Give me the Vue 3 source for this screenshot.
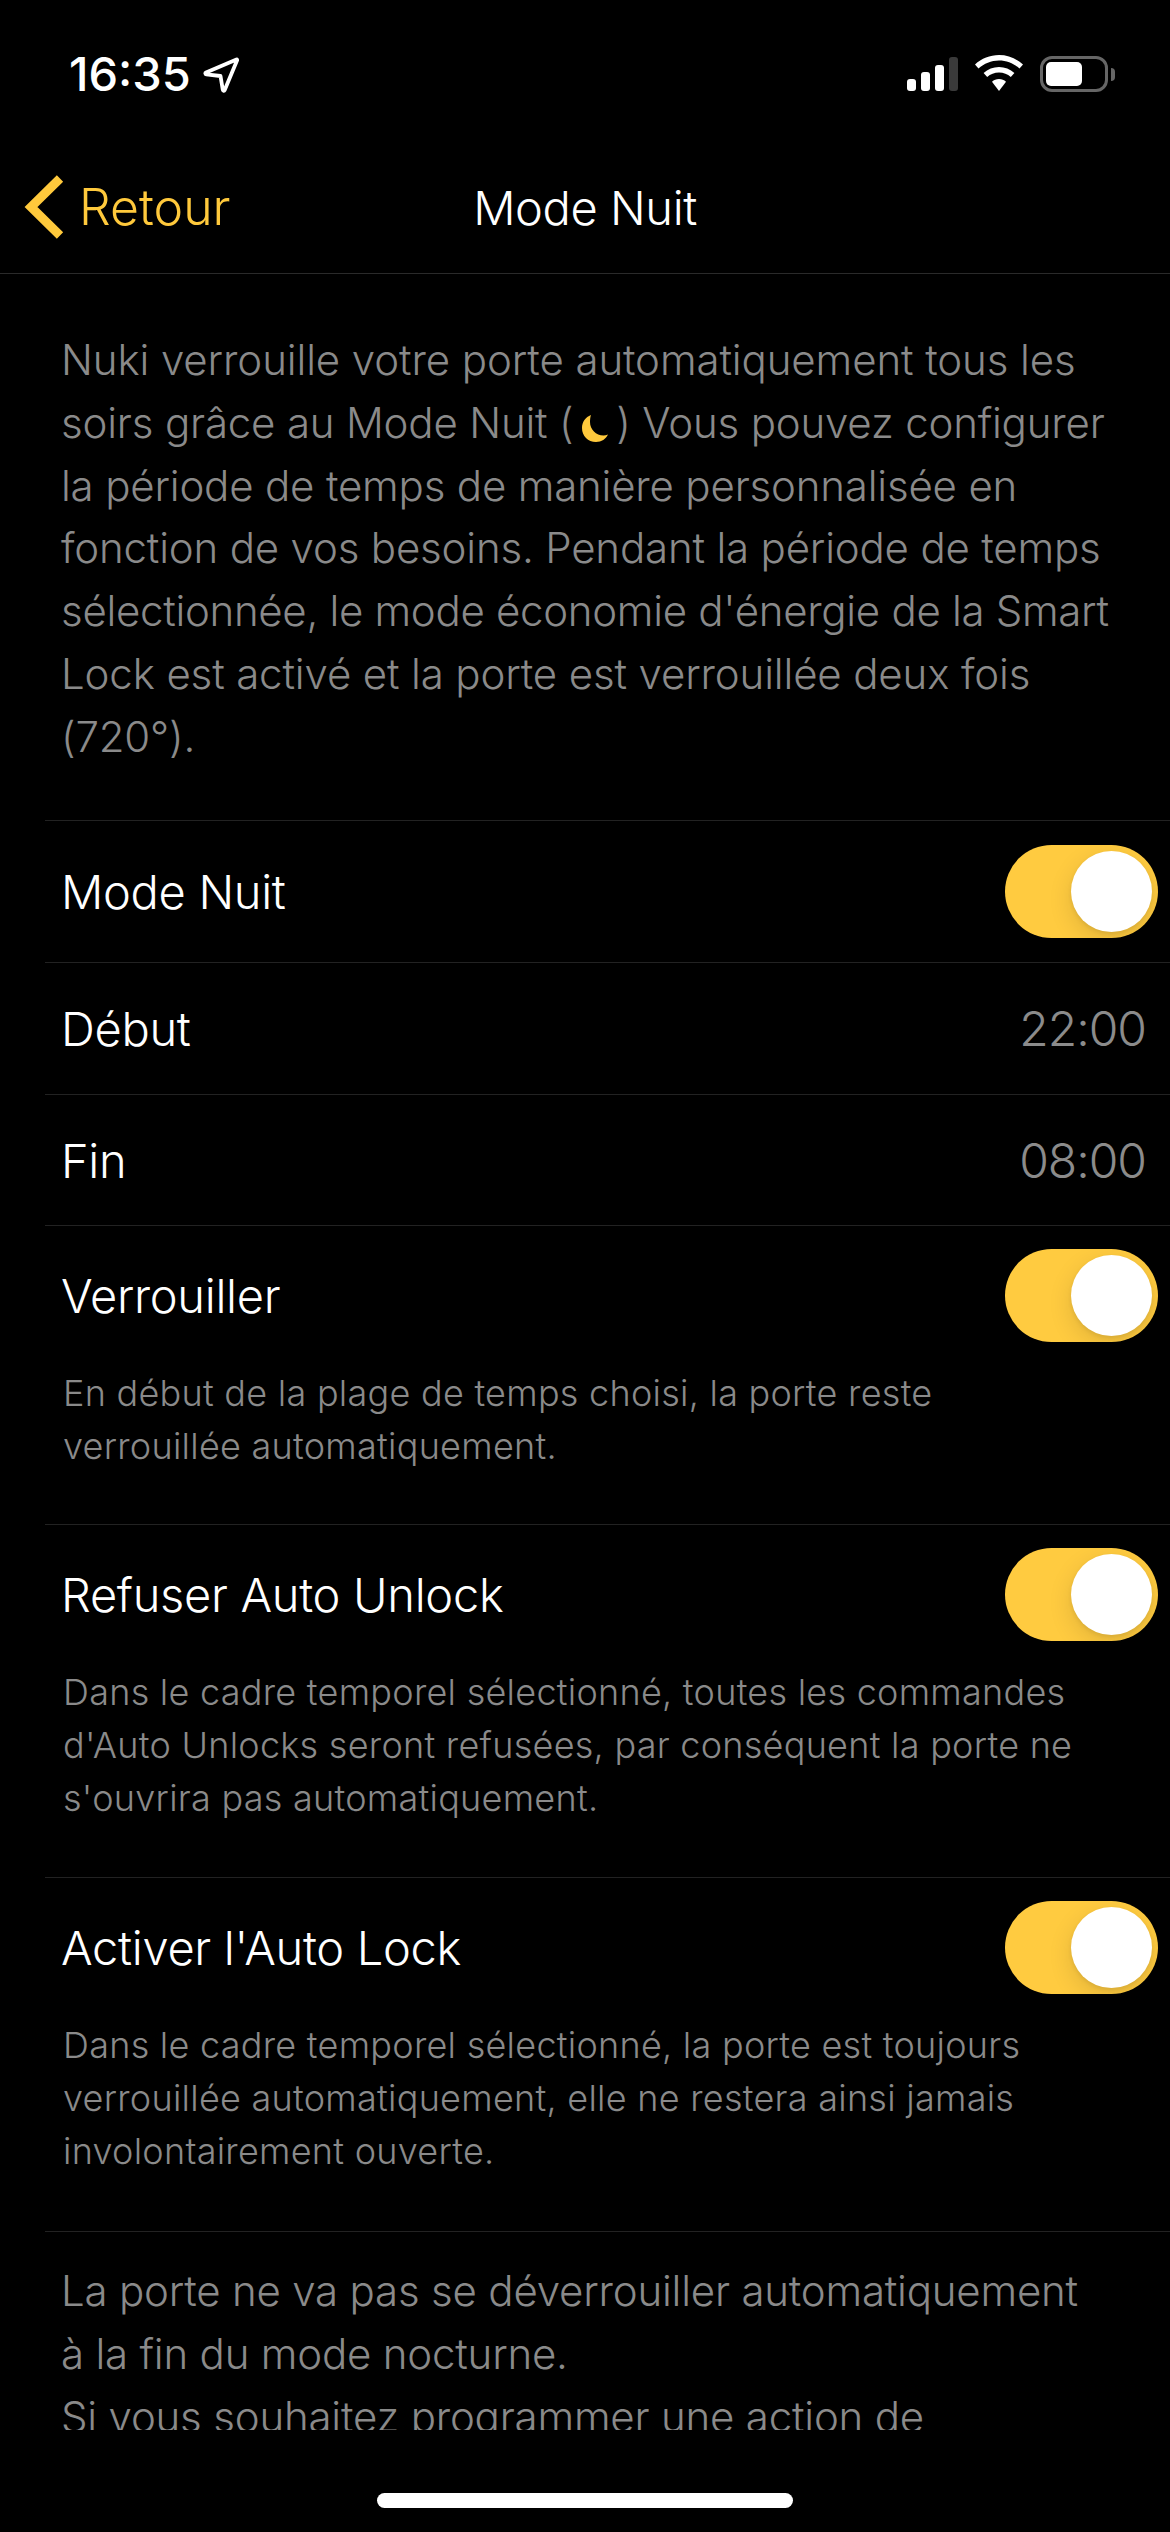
<script setup>
const timeRows = [
  { label: 'Début', value: '22:00', h: 'h132' },
  { label: 'Fin', value: '08:00', h: 'h131' }
]
const optionRows = [
  { label: 'Verrouiller', lines: ['En début de la plage de temps choisi, la porte reste', 'verrouillée automatiquement.'], h: 'o299' },
  { label: 'Refuser Auto Unlock', lines: ['Dans le cadre temporel sélectionné, toutes les commandes', "d'Auto Unlocks seront refusées, par conséquent la porte ne", "s'ouvrira pas automatiquement."], h: 'o353' },
  { label: "Activer l'Auto Lock", lines: ['Dans le cadre temporel sélectionné, la porte est toujours', 'verrouillée automatiquement, elle ne restera ainsi jamais', 'involontairement ouverte.'], h: 'o354' }
]
const introAfter = [
  { text: 'la période de temps de manière personnalisée en', track: -0.18 },
  { text: 'fonction de vos besoins. Pendant la période de temps', track: -0.18 },
  { text: "sélectionnée, le mode économie d'énergie de la Smart", track: -0.3 },
  { text: 'Lock est activé et la porte est verrouillée deux fois', track: -0.14 },
  { text: '(720°).', track: -0.18 }
]
</script>

<template>
  <div class="screen">
    <header class="status">
      <div class="time-group">
        <span class="time">16:35</span>
        <svg class="loc" viewBox="0 0 36 36" width="36" height="36"><path d="M33.5 2.5 3 15.5c-1 .5-.8 1.700.2 1.800L17.500 19l2.300 14c.2 1 1.400 1.200 1.800.3L34 3.500c.3-.7 0-1.200-.5-1z" fill="none" stroke="#fff" stroke-width="3.800" stroke-linejoin="round"/></svg>
      </div>
      <div class="status-right">
        <div class="signal">
          <i class="b1"></i><i class="b2"></i><i class="b3"></i><i class="b4"></i>
        </div>
        <svg class="wifi" viewBox="0 0 48 36" width="48" height="36">
          <path d="M24 0c9 0 17.500 3.500 24 9.500l-3.500 4C39 8.500 31.800 5.500 24 5.500S9 8.500 3.500 13.500L0 9.500C6.500 3.500 15 0 24 0z" fill="#fff"/>
          <path d="M24 12c5.800 0 11.200 2.200 15.400 6l-3.600 4C32.600 19.200 28.500 17.500 24 17.500s-8.600 1.700-11.800 4.500l-3.600-4C12.800 14.200 18.200 12 24 12z" fill="#fff"/>
          <path d="M24 24c2.700 0 5.200 1 7 2.700L24 36l-7-9.300c1.800-1.700 4.300-2.700 7-2.700z" fill="#fff"/>
        </svg>
        <div class="battery">
          <div class="cell"><div class="fill"></div></div>
          <div class="nub"></div>
        </div>
      </div>
    </header>

    <nav class="nav">
      <div class="back">
        <svg class="chev" viewBox="0 0 40 64" width="40" height="64"><path d="M36 3.500 7 32l29 28.500" fill="none" stroke="#ffc93c" stroke-width="9"/></svg>
        <span>Retour</span>
      </div>
      <div class="title">Mode Nuit</div>
    </nav>

    <main class="scroll">
      <div class="intro">
        <span class="intro-line first">Nuki verrouille votre porte automatiquement tous les</span>
        <span class="intro-line second">soirs grâce au Mode Nuit (
          <svg class="moon" viewBox="0 0 26 27" width="26" height="27"><path d="M9 0C3.500 2 0 7 0 13c0 8 6 14 14 14 5.500 0 10-3 12-7.500-1.500.7-3 1-4.500 1C14 20.500 8 14.500 8 7c0-2.500.3-5 1-7z" fill="#ffc93c"/></svg>
          <span>) Vous pouvez configurer</span></span>
        <span v-for="l in introAfter" :key="l.text" class="intro-line" :style="{ letterSpacing: l.track + 'px' }">{{ l.text }}</span>
      </div>

      <section class="list">
        <div class="row h142">
          <span class="label">Mode Nuit</span>
          <span class="toggle"><span class="knob"></span></span>
        </div>
        <div v-for="r in timeRows" :key="r.label" class="row" :class="r.h">
          <span class="label">{{ r.label }}</span>
          <span class="value">{{ r.value }}</span>
        </div>
        <div v-for="o in optionRows" :key="o.label" class="option" :class="o.h">
          <div class="option-head">
            <span class="label">{{ o.label }}</span>
            <span class="toggle"><span class="knob"></span></span>
          </div>
          <p class="desc">
            <span v-for="l in o.lines" :key="l" class="desc-line">{{ l }}</span>
          </p>
        </div>
        <p class="outro">
          La porte ne va pas se déverrouiller automatiquement<br>
          à la fin du mode nocturne.<br>
          Si vous souhaitez programmer une action de
        </p>
      </section>
    </main>

    <footer class="home"><div class="bar"></div></footer>
  </div>
</template>

<style>
html, body { margin: 0; background: #000; }
</style>

<style scoped>
.screen {
  width: 1170px;
  height: 2532px;
  background: #000;
  display: flex;
  flex-direction: column;
  overflow: hidden;
  font-family: Inter, "Liberation Sans", sans-serif;
  color: #fff;
}
.status {
  height: 110px;
  flex: none;
  display: flex;
  justify-content: space-between;
  padding: 55px 55px 0 69px;
  box-sizing: border-box;
}
.time-group { display: flex; align-items: flex-start; gap: 12px; }
.time {
  font-size: 47px;
  font-weight: 500;
  line-height: 38px;
  letter-spacing: 0;
}
.loc { margin-top: 2px; }
.status-right { display: flex; align-items: flex-start; }
.signal { display: flex; align-items: flex-end; gap: 5px; height: 34px; margin-top: 2px; }
.signal i { width: 9px; border-radius: 3px; background: #fff; display: block; }
.b1 { height: 12px; }
.b2 { height: 19px; }
.b3 { height: 26px; }
.signal .b4 { height: 34px; background: #3a3a3a; }
.wifi { margin-left: 17px; }
.battery { display: flex; align-items: center; margin-left: 17px; height: 36px; margin-top: 1px; }
.cell {
  width: 68px;
  height: 36px;
  box-sizing: border-box;
  border: 3px solid #666;
  border-radius: 12px;
  padding: 3px;
}
.fill { width: 36px; height: 24px; background: #fff; border-radius: 5px; }
.nub { width: 4px; height: 13px; margin-left: 3px; background: #666; border-radius: 0 4px 4px 0; }

.nav {
  height: 164px;
  flex: none;
  box-sizing: border-box;
  border-bottom: 1px solid #2a2a2a;
  position: relative;
  display: flex;
  align-items: center;
  justify-content: center;
  padding-top: 32px;
  font-weight: 300;
}
.back {
  position: absolute;
  left: 24px;
  top: 65px;
  display: flex;
  align-items: center;
  gap: 15px;
  font-size: 50px;
  color: #ffc93c;
}
.title { font-size: 47px; letter-spacing: -0.4px; }
.chev { display: block; }

.scroll {
  height: 2156px;
  flex: none;
  box-sizing: border-box;
  overflow: hidden;
  color: #8a8a8a;
}
.intro {
  padding: 55px 40px 40px 61px;
  font-size: 42px;
  line-height: 62.8px;
  font-weight: 300;
  white-space: nowrap;
  height: 546px;
  box-sizing: border-box;
}
.intro-line { display: block; letter-spacing: -0.18px; }
.intro-line.first { letter-spacing: -0.1px; }
.moon { vertical-align: -4px; margin: 0 8px 0 -3px; }

.list { margin-left: 45px; }
.row, .option {
  box-sizing: border-box;
  border-top: 1px solid #222;
  padding-left: 16px;
}
.row {
  display: flex;
  align-items: center;
  justify-content: space-between;
}
.h142 { height: 142px; padding-right: 12px; }
.h132 { height: 132px; padding-right: 24px; }
.h131 { height: 131px; padding-right: 24px; }
.o299 { height: 299px; }
.o353 { height: 353px; }
.o354 { height: 354px; }
.option-head {
  display: flex;
  align-items: center;
  justify-content: space-between;
  height: 139px;
  padding-right: 12px;
}
.label { font-size: 47px; font-weight: 300; color: #fff; letter-spacing: -0.3px; }
.value { font-size: 48px; font-weight: 300; color: #8b8b8b; letter-spacing: -1px; }
.toggle {
  width: 153px;
  height: 93px;
  border-radius: 47px;
  background: #ffcb40;
  display: flex;
  align-items: center;
  justify-content: flex-end;
  padding-right: 6px;
  box-sizing: border-box;
}
.knob {
  width: 81px;
  height: 81px;
  border-radius: 50%;
  background: #fff;
  box-shadow: 0 8px 24px rgba(0, 0, 0, 0.12), 0 2px 4px rgba(0, 0, 0, 0.08);
}
.desc {
  margin: 0;
  padding: 2px 0 0 2px;
  font-size: 36px;
  line-height: 53px;
  font-weight: 300;
  letter-spacing: 0.26px;
  color: #8a8a8a;
  white-space: nowrap;
}
.desc-line { display: block; }
.outro {
  margin: 0;
  border-top: 1px solid #222;
  padding: 28px 0 0 16px;
  font-size: 42px;
  line-height: 62.8px;
  font-weight: 300;
  letter-spacing: -0.2px;
  white-space: nowrap;
}
.home {
  flex: 1;
  display: flex;
  justify-content: center;
  padding-top: 63px;
  box-sizing: border-box;
}
.bar { width: 416px; height: 15px; border-radius: 8px; background: #fff; }
</style>
